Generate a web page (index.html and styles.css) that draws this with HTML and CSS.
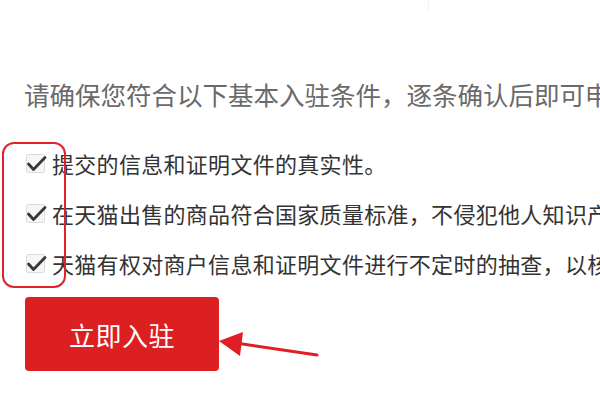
FILE: index.html
```html
<!DOCTYPE html>
<html lang="zh-CN">
<head>
<meta charset="utf-8">
<title>入驻条件</title>
<link rel="stylesheet" href="styles.css">
</head>
<body>
<div class="page">
  <div class="topline"></div>
  <p class="intro">请确保您符合以下基本入驻条件，逐条确认后即可申请入驻</p>
  <ul class="terms">
    <li class="term"><span class="box"><svg viewBox="0 0 19 19" width="19" height="19"><path d="M2.5 10 L7.5 15.5 L19 3.5" fill="none" stroke="#383838" stroke-width="2.8" stroke-linecap="round" stroke-linejoin="round"/></svg></span><span class="label">提交的信息和证明文件的真实性。</span></li>
    <li class="term"><span class="box"><svg viewBox="0 0 19 19" width="19" height="19"><path d="M2.5 10 L7.5 15.5 L19 3.5" fill="none" stroke="#383838" stroke-width="2.8" stroke-linecap="round" stroke-linejoin="round"/></svg></span><span class="label">在天猫出售的商品符合国家质量标准，不侵犯他人知识产权。</span></li>
    <li class="term"><span class="box"><svg viewBox="0 0 19 19" width="19" height="19"><path d="M2.5 10 L7.5 15.5 L19 3.5" fill="none" stroke="#383838" stroke-width="2.8" stroke-linecap="round" stroke-linejoin="round"/></svg></span><span class="label">天猫有权对商户信息和证明文件进行不定时的抽查，以核实真实性。</span></li>
  </ul>
  <div class="highlight"></div>
  <button class="cta">立即入驻</button>
  <svg class="arrow" width="600" height="400" viewBox="0 0 600 400">
    <line x1="317" y1="355" x2="236" y2="343" stroke="#e01e25" stroke-width="3" stroke-linecap="round"/>
    <polygon points="219,341 243,332 240,356" fill="#e01e25"/>
  </svg>
</div>
</body>
</html>
```

FILE: styles.css
```css
* { box-sizing: border-box; }
html, body { margin: 0; padding: 0; background: #fff; }
body { font-family: "Noto Sans CJK SC", "Noto Sans", sans-serif; }
.page {
  position: relative;
  width: 600px;
  height: 400px;
  overflow: hidden;
  padding-left: 24px;
}
.topline {
  position: absolute;
  left: 428px;
  top: 0;
  width: 1px;
  height: 12px;
  background: #f2f2f2;
}
.intro {
  margin: 0;
  padding-top: 79px;
  font-size: 25.5px;
  line-height: 30px;
  color: #6a6a6a;
  white-space: nowrap;
}
.terms {
  list-style: none;
  margin: 29px 0 0 -2px;
  padding: 0;
}
.term {
  display: flex;
  align-items: center;
  height: 50px;
  white-space: nowrap;
}
.box {
  position: relative;
  display: block;
  width: 19px;
  height: 19px;
  margin-left: 4px;
  margin-right: 7px;
  border: 1px solid #dcdcdc;
  border-radius: 2px;
  background: #f6f6f6;
  flex: none;
}
.box svg {
  position: absolute;
  left: -1px;
  top: -1px;
  overflow: visible;
}
.label {
  font-size: 22px;
  line-height: 30px;
  letter-spacing: 0.3px;
  color: #333;
}
.highlight {
  position: absolute;
  left: 2px;
  top: 142px;
  width: 64px;
  height: 146px;
  border: 2px solid #e0222c;
  border-radius: 12px;
}
.cta {
  display: block;
  margin: 9px 0 0 1px;
  width: 194px;
  height: 74px;
  border: none;
  border-radius: 4px;
  background: #dc2021;
  color: #fff;
  font-family: "Noto Sans CJK SC", sans-serif;
  font-size: 26px;
  letter-spacing: 0.5px;
  padding: 0;
}
.arrow {
  position: absolute;
  left: 0;
  top: 0;
  pointer-events: none;
}
```
